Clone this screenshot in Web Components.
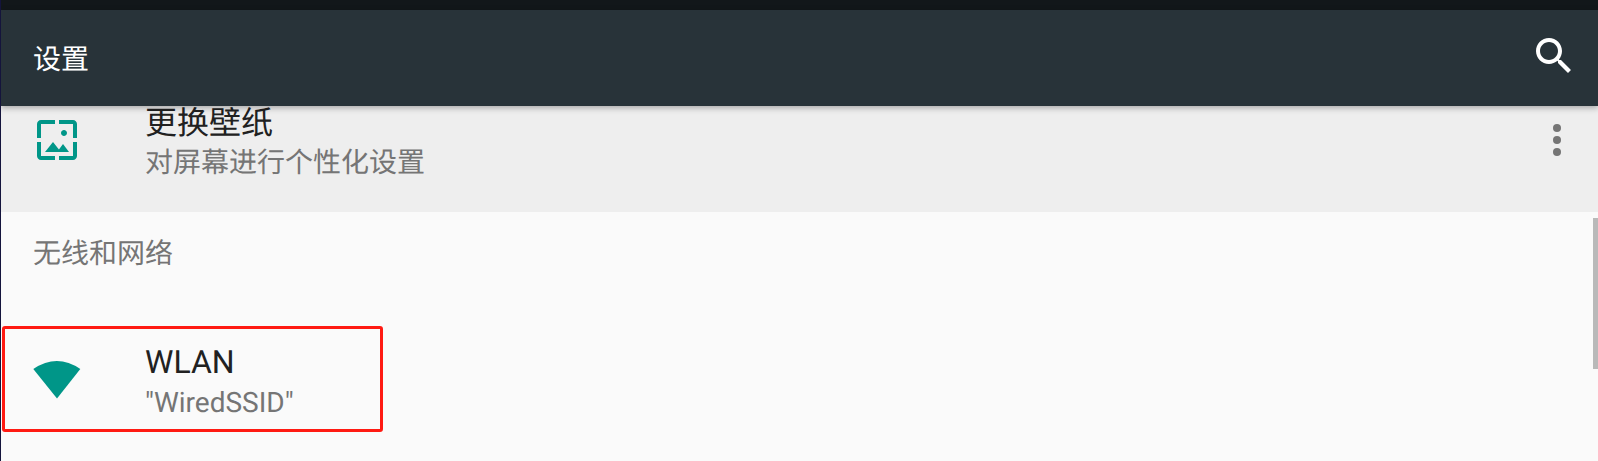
<!DOCTYPE html>
<html lang="zh"><head><meta charset="utf-8"><title>设置</title>
<style>
html,body{margin:0;padding:0;background:#fafafa}
body{width:1598px;height:461px;overflow:hidden;font-family:Roboto,"Noto Sans CJK SC",sans-serif}
</style></head><body>
<settings-app>
  <app-toolbar title="设置"></app-toolbar>
  <settings-row title="更换壁纸" summary="对屏幕进行个性化设置" icon="wallpaper" clipped menu></settings-row>
  <settings-section label="无线和网络">
    <settings-row title="WLAN" summary='"WiredSSID"' icon="wifi" highlighted></settings-row>
  </settings-section>
</settings-app>
<script>
const FONT='Roboto,"Noto Sans CJK SC",sans-serif';
class SettingsApp extends HTMLElement{constructor(){super();this.attachShadow({mode:'open'}).innerHTML=`<style>
:host{display:flex;flex-direction:column;position:relative;width:1598px;height:461px;box-sizing:border-box;border-left:1px solid #14143c;overflow:hidden;background:#fafafa;font-family:${FONT};text-rendering:geometricPrecision}
.bar{position:absolute;right:0;top:218px;width:5px;height:151px;background:#b9b9b9}
</style><slot></slot><div class="bar"></div>`}}
class AppToolbar extends HTMLElement{constructor(){super();this.attachShadow({mode:'open'}).innerHTML=`<style>
:host{display:block;position:relative;z-index:2;flex:none}
.status{height:10px;background:#12171a}
.bar{height:96px;background:#283339;display:flex;align-items:center;justify-content:space-between;padding:0 20px 0 32px;box-shadow:0 2px 6px rgba(0,0,0,.3)}
.t{color:#fff;font-size:28px;line-height:36px;position:relative;top:2px}
svg{display:block;width:48px;height:48px;margin-top:-4px}
</style><div class="status"></div><div class="bar"><span class="t"></span>
<svg viewBox="0 0 24 24" fill="#fff"><path d="M15.5 14h-.79l-.28-.27C15.41 12.59 16 11.11 16 9.5 16 5.91 13.09 3 9.5 3S3 5.91 3 9.5 5.91 16 9.5 16c1.61 0 3.09-.59 4.23-1.57l.27.28v.79l5 4.99L20.49 19l-4.99-5zm-6 0C7.01 14 5 11.99 5 9.5S7.01 5 9.5 5 14 7.01 14 9.5 11.99 14 9.5 14z"/></svg></div>`;
this.shadowRoot.querySelector('.t').textContent=this.getAttribute('title')}}
const ICONS={
wallpaper:`<svg viewBox="0 0 24 24" fill="#009688"><path d="M4 4h7V2H4c-1.1 0-2 .9-2 2v7h2V4zm6 9l-4 5h12l-3-4-2.03 2.71L10 13zm7-4.5c0-.83-.67-1.5-1.5-1.5S14 7.67 14 8.5s.67 1.5 1.5 1.5S17 9.33 17 8.5zM20 2h-7v2h7v7h2V4c0-1.1-.9-2-2-2zm0 18h-7v2h7c1.1 0 2-.9 2-2v-7h-2v7zM4 13H2v7c0 1.1.9 2 2 2h7v-2H4v-7z"/></svg>`,
wifi:`<svg viewBox="0 0 48 48" fill="#009688"><path d="M.3 12Q24-4 47.300 12L24 41.500Z"/></svg>`};
class SettingsRow extends HTMLElement{constructor(){super();const clipped=this.hasAttribute('clipped'),hi=this.hasAttribute('highlighted');
this.attachShadow({mode:'open'}).innerHTML=`<style>
:host{display:flex;position:relative;align-items:flex-start;flex:none;height:106px;box-sizing:border-box;padding:${clipped?'10px':'31px'} 0 0 32px;background:${clipped?'#eee':'transparent'}}
.icon{flex:none;width:48px;height:48px}
svg{display:block;width:48px;height:48px}
.text{margin:${clipped?'-15px':'-17px'} 0 0 64px;flex:1;min-width:0}
.title{font-size:32px;line-height:44px;color:#212121}
.sum{font-size:28px;line-height:36px;color:#757575;margin-top:${clipped?'0':'1px'}}
.menu{flex:none;width:48px;height:48px;margin-right:17px}
.hl{position:absolute;left:1px;top:0;width:381px;height:106px;box-sizing:border-box;border:3px solid #ff1a12;border-radius:3px}
</style><div class="icon">${ICONS[this.getAttribute('icon')]}</div>
<div class="text"><div class="title"></div><div class="sum"></div></div>
${this.hasAttribute('menu')?`<div class="menu"><svg viewBox="0 0 24 24" fill="#757575"><circle cx="12" cy="6" r="2"/><circle cx="12" cy="12" r="2"/><circle cx="12" cy="18" r="2"/></svg></div>`:''}
${hi?'<div class="hl"></div>':''}`;
this.shadowRoot.querySelector('.title').textContent=this.getAttribute('title');
this.shadowRoot.querySelector('.sum').textContent=this.getAttribute('summary')}}
class SettingsSection extends HTMLElement{constructor(){super();this.attachShadow({mode:'open'}).innerHTML=`<style>
:host{display:block;flex:none}
.label{font-size:28px;line-height:36px;color:#757575;padding:24px 0 54px 32px}
</style><div class="label"></div><slot></slot>`;
this.shadowRoot.querySelector('.label').textContent=this.getAttribute('label')}}
customElements.define('settings-app',SettingsApp);
customElements.define('app-toolbar',AppToolbar);
customElements.define('settings-row',SettingsRow);
customElements.define('settings-section',SettingsSection);
</script>
</body></html>
